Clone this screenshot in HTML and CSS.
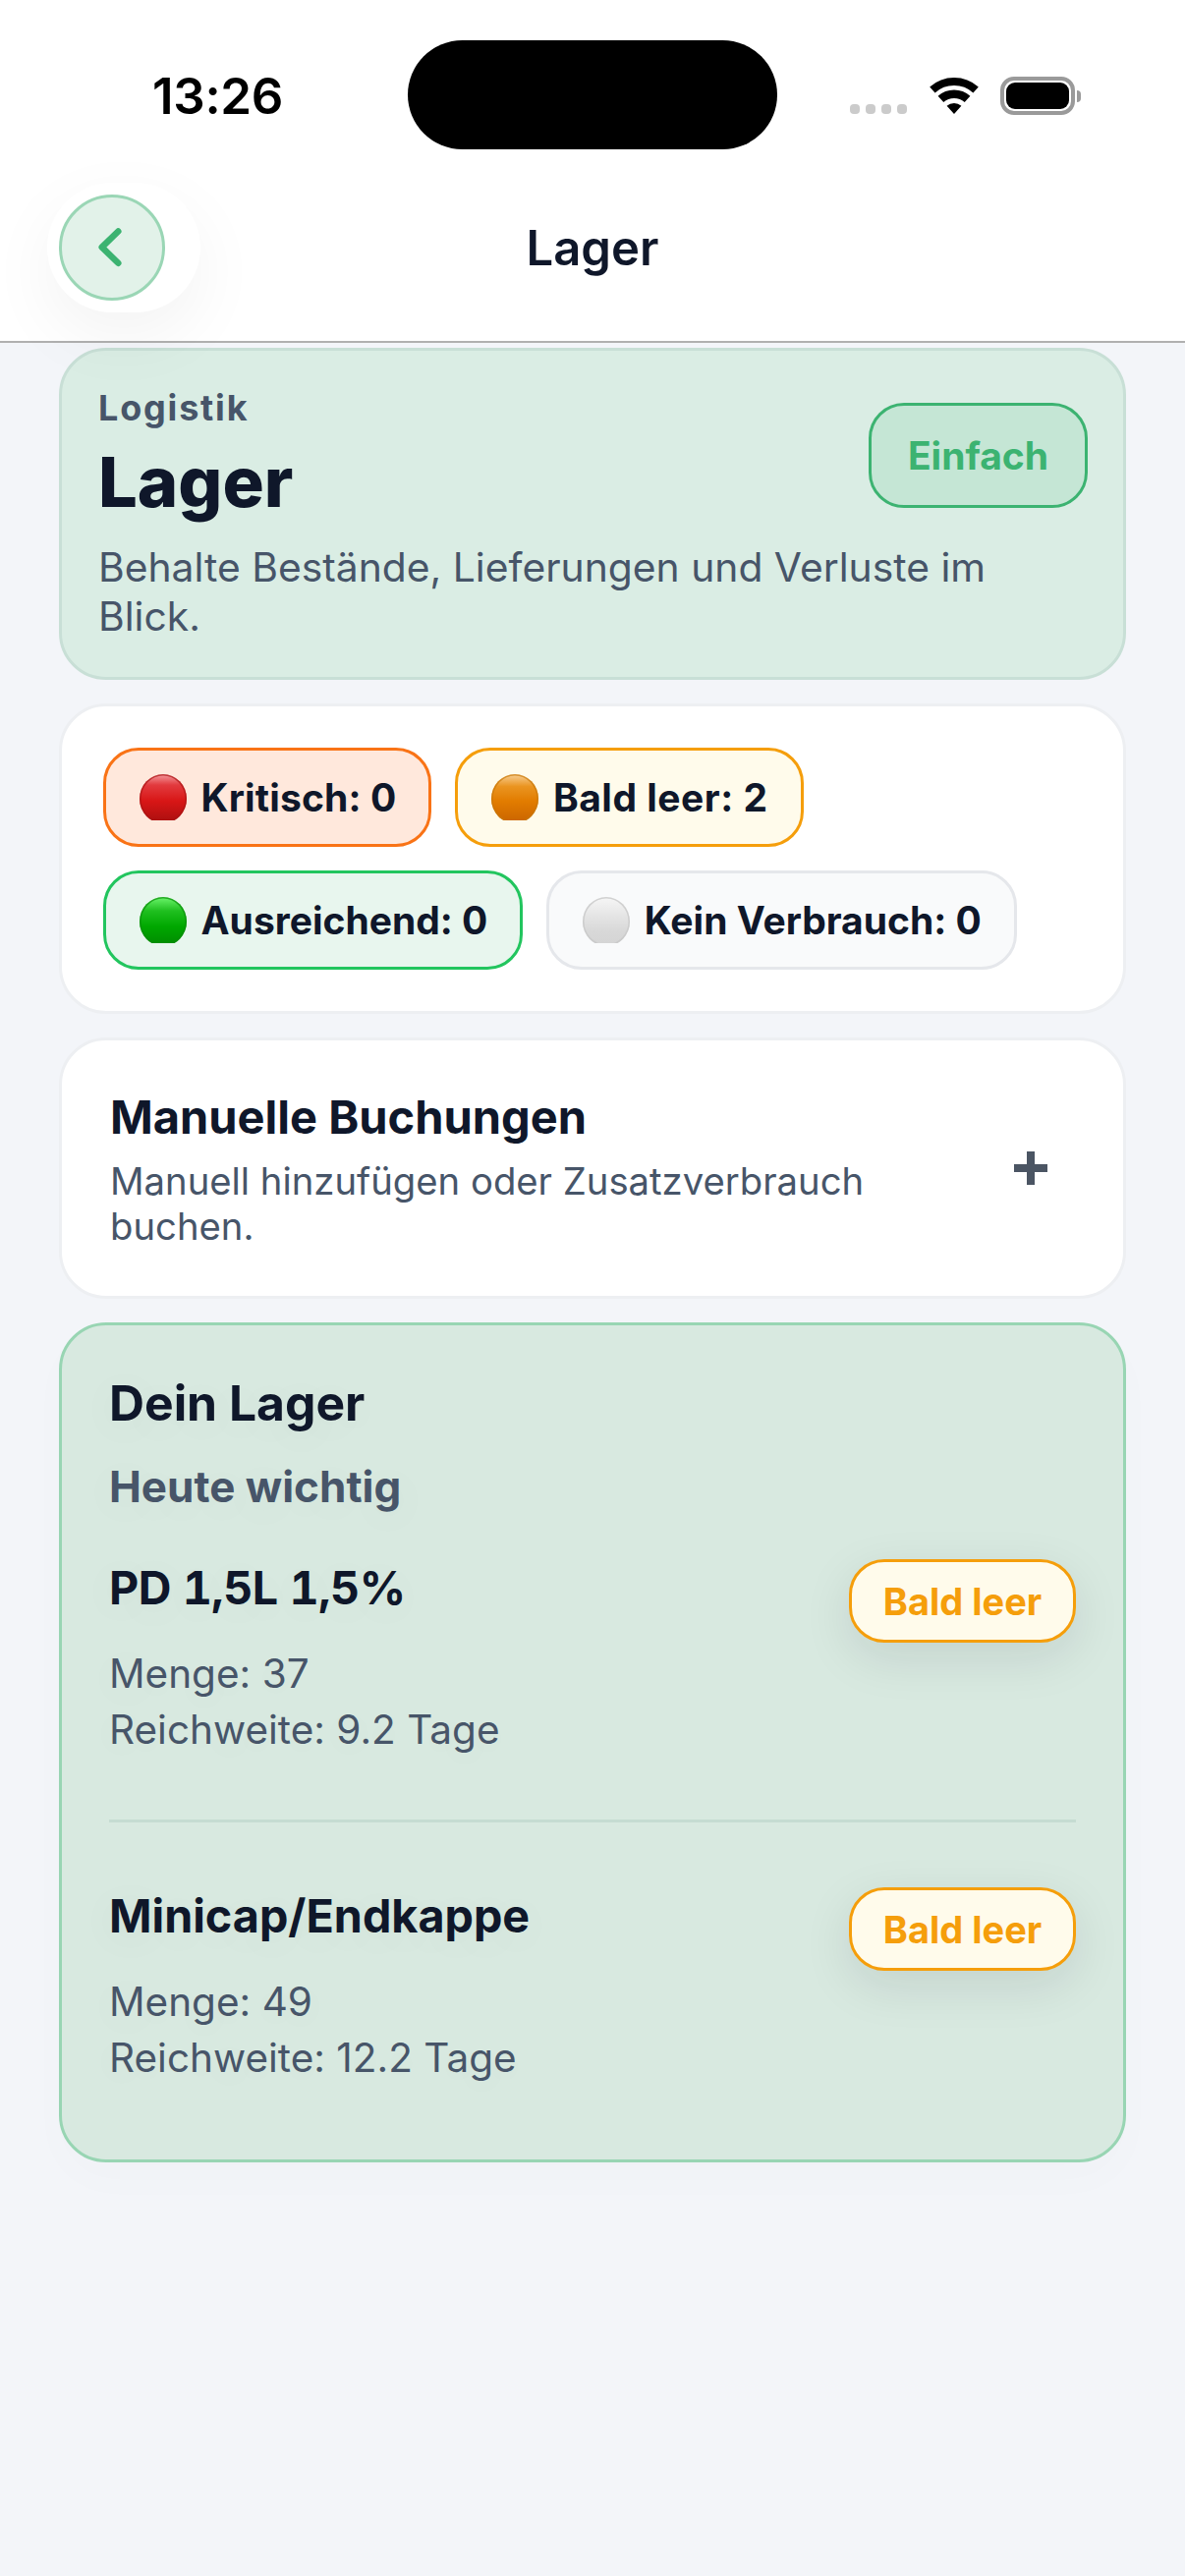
FILE: index.html
```html
<!DOCTYPE html>
<html lang="de">
<head>
<meta charset="utf-8">
<title>Lager</title>
<link rel="stylesheet" href="styles.css">
</head>
<body>
<header class="top">
  <div class="status">
    <span class="time">13:26</span>
    <div class="island"></div>
    <div class="status-icons">
      <div class="signal"><i></i><i></i><i></i><i></i></div>
      <svg class="wifi" width="50" height="37" viewBox="0 0 50 37">
        <path d="M2.9 12.5A33 33 0 0 1 47.1 12.5" fill="none" stroke="#000" stroke-width="8"/>
        <path d="M11.45 21.95A20.25 20.25 0 0 1 38.55 21.95" fill="none" stroke="#000" stroke-width="8.5"/>
        <path d="M25 37L17.6 28.8A11 11 0 0 1 32.4 28.8Z" fill="#000"/>
      </svg>
      <div class="battery"><div class="level"></div></div>
      <div class="nub"></div>
    </div>
  </div>
  <nav class="nav">
    <div class="back-halo">
      <button class="back" aria-label="Zurück">
        <svg width="26" height="44" viewBox="0 0 26 44"><path d="M22 3L4 20.5L22 38" fill="none" stroke="#3cb371" stroke-width="7" stroke-linecap="round" stroke-linejoin="round"/></svg>
      </button>
    </div>
    <h1 class="nav-title">Lager</h1>
  </nav>
</header>
<main class="page">
  <section class="card hero">
    <div class="hero-top">
      <div>
        <div class="eyebrow">Logistik</div>
        <h2 class="hero-title">Lager</h2>
      </div>
      <span class="level-pill">Einfach</span>
    </div>
    <p class="hero-desc">Behalte Bestände, Lieferungen und Verluste im Blick.</p>
  </section>
  <section class="card filters">
    <div class="pill pill-red"><span class="dot dot-red"></span>Kritisch: 0</div>
    <div class="pill pill-amber"><span class="dot dot-amber"></span>Bald leer: 2</div>
    <div class="pill pill-green"><span class="dot dot-green"></span>Ausreichend: 0</div>
    <div class="pill pill-grey"><span class="dot dot-grey"></span>Kein Verbrauch: 0</div>
  </section>
  <section class="card manual">
    <div class="manual-text">
      <h3 class="manual-title">Manuelle Buchungen</h3>
      <p class="manual-sub">Manuell hinzufügen oder Zusatzverbrauch buchen.</p>
    </div>
    <svg class="plus" width="34" height="34" viewBox="0 0 34 34"><path d="M17 0V34M0 17H34" stroke="#4b5563" stroke-width="8"/></svg>
  </section>
  <section class="card stock">
    <h3 class="stock-title">Dein Lager</h3>
    <h4 class="stock-sub">Heute wichtig</h4>
    <article class="item item-first">
      <div class="item-text">
        <div class="item-name item-name-num">PD 1,5L 1,5%</div>
        <div class="item-meta">Menge: 37<br>Reichweite: 9.2 Tage</div>
      </div>
      <span class="badge">Bald leer</span>
    </article>
    <article class="item">
      <div class="item-text">
        <div class="item-name">Minicap/Endkappe</div>
        <div class="item-meta">Menge: 49<br>Reichweite: 12.2 Tage</div>
      </div>
      <span class="badge">Bald leer</span>
    </article>
  </section>
</main>
</body>
</html>
```
FILE: styles.css
```css
* { box-sizing: border-box; }
html, body { margin: 0; padding: 0; }
body {
  width: 1206px;
  height: 2622px;
  overflow: hidden;
  background: #f3f5f9;
  font-family: Inter, "Noto Sans", sans-serif;
  color: #0f172a;
}
h1, h2, h3, h4, p { margin: 0; }

.top {
  position: relative;
  z-index: 2;
  height: 349px;
  background: #fff;
  border-bottom: 2px solid #b0b0b0;
}
.status {
  position: relative;
  height: 186px;
  padding: 0 106px 0 155px;
  display: flex;
  justify-content: space-between;
}
.time {
  font-size: 51px;
  font-weight: 600;
  line-height: 64px;
  margin-top: 66px;
  letter-spacing: -0.3px;
  color: #000;
}
.island {
  position: absolute;
  left: 415px;
  top: 41px;
  width: 376px;
  height: 111px;
  border-radius: 56px;
  background: #000;
}
.status-icons {
  display: flex;
  align-items: flex-start;
  padding-top: 78px;
}
.signal {
  display: flex;
  gap: 6px;
  margin-top: 28px;
  margin-right: 23px;
}
.signal i {
  width: 10px;
  height: 10px;
  border-radius: 4px;
  background: #cbcbcb;
}
.wifi { margin-top: 1px; margin-right: 22px; }
.battery {
  width: 76px;
  height: 39px;
  border: 4px solid #9a9a9a;
  border-radius: 14px;
  padding: 2px;
}
.level {
  width: 100%;
  height: 100%;
  border-radius: 9px;
  background: #000;
}
.nub {
  width: 4px;
  height: 12px;
  margin: 14px 0 0 2px;
  border-radius: 0 6px 6px 0;
  background: #9a9a9a;
}

.nav {
  position: relative;
  height: 161px;
}
.back-halo {
  position: absolute;
  left: 48px;
  top: 0;
  width: 156px;
  height: 132px;
  padding: 12px 36px 12px 12px;
  border-radius: 66px;
  background: #fff;
  box-shadow: 0 24px 70px rgba(0, 0, 0, 0.05);
}
.back {
  width: 108px;
  height: 108px;
  padding: 0 0 0 2px;
  display: flex;
  align-items: center;
  justify-content: center;
  border: 3px solid #9ad6b5;
  border-radius: 50%;
  background: #e2f2e9;
}
.back svg { width: 24px; height: 44px; margin: 2px 6px 0 0; }
.nav-title {
  text-align: center;
  font-size: 49px;
  font-weight: 600;
  line-height: 60px;
  padding-top: 37px;
  color: #0f172a;
}

.page {
  padding: 5px 60px 0;
  display: flex;
  flex-direction: column;
  gap: 24px;
}
.card {
  border: 3px solid #edeff2;
  border-radius: 48px;
  background: #fff;
}

.hero {
  background: #daede4;
  border-color: #c8dfd6;
  padding: 36px 36px 37px 37px;
}
.hero-top {
  display: flex;
  justify-content: space-between;
  align-items: center;
}
.eyebrow {
  font-size: 36px;
  font-weight: 700;
  line-height: 44px;
  letter-spacing: 1.8px;
  color: #475569;
}
.hero-title {
  margin-top: 12px;
  font-size: 70.5px;
  font-weight: 800;
  line-height: 84px;
  color: #0f172a;
}
.level-pill {
  width: 223px;
  height: 107px;
  display: flex;
  align-items: center;
  justify-content: center;
  border: 3px solid #3cb371;
  border-radius: 36px;
  background: #c5e6d5;
  color: #3cb371;
  font-size: 39px;
  font-weight: 700;
}
.hero-desc {
  margin-top: 19px;
  font-size: 40.8px;
  font-weight: 400;
  line-height: 50px;
  color: #475569;
}

.filters {
  padding: 42px;
  display: flex;
  flex-wrap: wrap;
  gap: 24px;
}
.pill {
  height: 101px;
  padding: 0 33px 0 33.5px;
  display: flex;
  align-items: center;
  gap: 15px;
  border: 3px solid;
  border-radius: 36px;
  font-size: 39px;
  font-weight: 700;
  color: #0f172a;
}
.pill-red { background: #ffe8dc; border-color: #f97316; letter-spacing: 0.15px; }
.pill-amber { background: #fffbeb; border-color: #f59e0b; letter-spacing: 0.5px; }
.pill-green { background: #e8f6ee; border-color: #22c55e; }
.pill-grey { background: #f9fafb; border-color: #e5e7eb; }
.dot {
  width: 48px;
  height: 47px;
  overflow: hidden;
  flex: none;
}
.dot::before {
  content: "";
  display: block;
  width: 48px;
  height: 50px;
  border-radius: 50%;
}
.dot-red::before {
  background: linear-gradient(#f49a9e 0%, #e23a3e 22%, #d81616 55%, #a80f0f 100%);
  box-shadow: inset 0 0 0 1.5px rgba(170, 20, 20, 0.7);
}
.dot-amber::before {
  background: linear-gradient(#f8cf94 0%, #ea9420 25%, #e27c00 55%, #c96400 100%);
  box-shadow: inset 0 0 0 1.5px rgba(200, 120, 10, 0.7);
}
.dot-green::before {
  background: linear-gradient(#6cf56c 0%, #20c020 28%, #00a800 60%, #008a00 100%);
  box-shadow: inset 0 0 0 1.5px rgba(10, 140, 10, 0.7);
}
.dot-grey::before {
  background: linear-gradient(#f6f6f6 0%, #e4e4e4 40%, #d8d8d8 70%, #d4d4d4 100%);
  box-shadow: inset 0 0 0 1.5px rgba(200, 200, 200, 0.8);
}

.manual {
  height: 266px;
  padding: 0 60px 0 49px;
  display: flex;
  align-items: center;
  justify-content: space-between;
}
.manual-text { width: 800px; }
.manual-title {
  font-size: 47px;
  font-weight: 700;
  line-height: 60px;
  color: #0f172a;
}
.manual-sub {
  margin-top: 12px;
  font-size: 38.25px;
  line-height: 46px;
  color: #475569;
}
.plus { margin-right: 17px; }

.stock {
  height: 855px;
  padding: 48px;
  background: #d8e9e0;
  border-color: #98d5b3;
  box-shadow: 0 18px 45px rgba(15, 23, 42, 0.015);
  text-shadow: 0 6px 40px rgba(0, 0, 0, 0.06);
}
.stock-title {
  font-size: 49.8px;
  font-weight: 700;
  line-height: 62px;
  color: #0f172a;
}
.stock-sub {
  margin-top: 27px;
  font-size: 44px;
  font-weight: 700;
  line-height: 54px;
  color: #475569;
}
.item {
  display: flex;
  justify-content: space-between;
  align-items: flex-start;
}
.item-first {
  margin-top: 47px;
  padding-bottom: 63px;
  margin-bottom: 66px;
  border-bottom: 3px solid #c5dcd2;
}
.item-name {
  font-size: 46.7px;
  font-weight: 700;
  line-height: 58px;
  color: #0f172a;
}
.item-name-num {
  font-feature-settings: "tnum";
  letter-spacing: -0.6px;
}
.item-meta {
  margin-top: 31px;
  font-size: 40.5px;
  line-height: 56.7px;
  color: #475569;
}
.badge {
  width: 231px;
  height: 85px;
  display: flex;
  align-items: center;
  justify-content: center;
  border: 3px solid #f59e0b;
  border-radius: 36px;
  background: #fffbeb;
  color: #f59e0b;
  font-size: 38px;
  font-weight: 700;
  text-shadow: none;
  box-shadow: 0 15px 50px rgba(15, 23, 42, 0.1);
}
```
